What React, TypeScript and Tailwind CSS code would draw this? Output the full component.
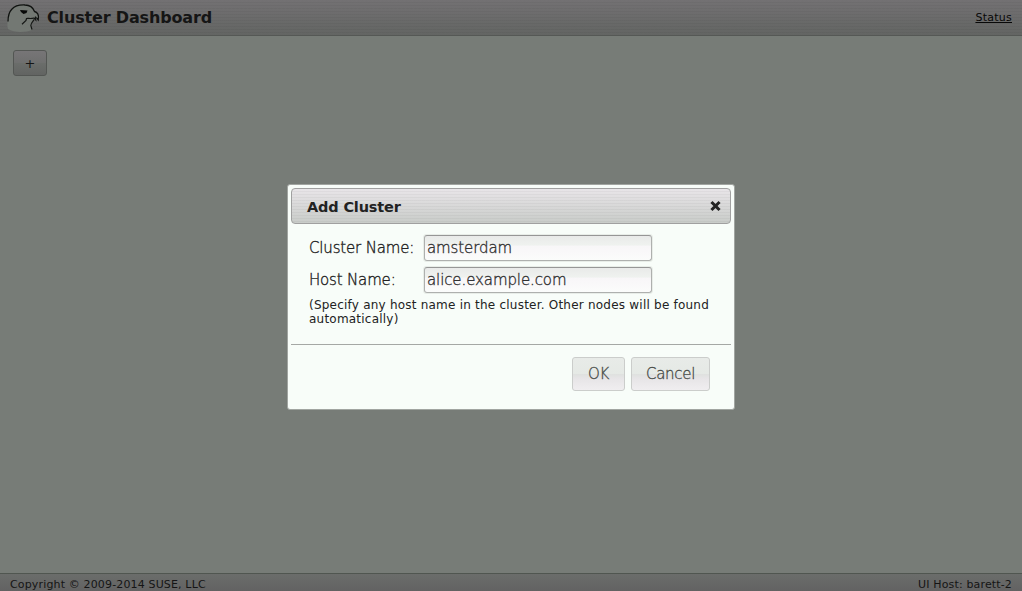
import React from "react";

const sans = "font-['DejaVu_Sans',sans-serif]";

function Logo() {
  return (
    <svg className="-mt-0.5 h-8 w-9 shrink-0" viewBox="0 0 36 32" fill="none">
      <path
        d="M2 28C0.500 24 2 20 2 16C3 10 6 6 10 5C15 3 20 3 24 5C27 7 28 9 28.500 11C32 12 33 14 32.500 18L30 16L28 18C25 22 25.500 25 26 29C20 31.500 8 32 2 28Z"
        fill="#737873"
      />
      <path
        d="M2 20.500C2 15 3 11 6 8C9 4.500 14 3.800 19 4C24 4 27 6.500 28.500 10.500C31 11 33.500 13.500 32.200 19L30.500 16.500"
        stroke="#101210"
        strokeWidth="1.300"
      />
      <path d="M29.500 15.500L29.800 19L28 17C25 18 22.500 17.200 20.500 17.500L20 19.500L16 23.200" stroke="#151715" strokeWidth="1.200" />
      <path d="M28 18.500C27.500 20.500 25 21.500 24.800 24.500L26 28.500" stroke="#151715" strokeWidth="1.200" />
      <path d="M14 9L21.500 9.500L20.500 12L17.500 13L15 11Z" fill="#080908" />
    </svg>
  );
}

function Field({ label, value }: { label: string; value: string }) {
  return (
    <div className="flex h-8 items-center">
      <label className="w-[114px] text-[15px] leading-[18px] font-extralight tracking-[-0.17px] [-webkit-text-stroke:0.35px]">{label}</label>
      <div className="rounded-[3px] border border-[#e8ede8]">
        <input
          className="block h-[26px] w-[228px] rounded-[3px] border border-[#aeb0ae] border-t-[#969696] bg-[linear-gradient(#e9eae9,#eff2ef_38%,#f8f6f8_42%,#fbfcfb)] px-[2px] text-[15px] font-extralight tracking-[-0.1px] text-[#333] outline-none [-webkit-text-stroke:0.35px]"
          defaultValue={value}
        />
      </div>
    </div>
  );
}

export default function App() {
  return (
    <div className={`relative flex h-[591px] w-[1022px] flex-col overflow-hidden bg-[#777c77] text-[#151515] ${sans}`}>
      <header className="flex h-9 shrink-0 items-center justify-between border-b border-[#555855] bg-[repeating-linear-gradient(transparent_0px,transparent_2px,#00000009_2px,#00000009_3px),linear-gradient(#737173,#636563)] pr-2.5 pl-1.5">
        <div className="flex items-center">
          <Logo />
          <h1 className="ml-[5px] text-[16px] leading-5 font-bold tracking-[-0.16px]">Cluster Dashboard</h1>
        </div>
        <a className="pt-px text-[11px] tracking-[0.25px] text-[#080808] underline" href="#">Status</a>
      </header>
      <main className="flex-1 px-[13px] pt-3.5">
        <button className="flex h-[26px] w-[34px] items-center justify-center rounded-[3px] border border-[#535653] bg-[linear-gradient(#777577,#6f706f_48%,#6a6d6a_52%,#626462)] pt-px text-[13px]">+</button>
      </main>
      <footer className="flex h-[18px] shrink-0 items-center justify-between border-t border-[#505650] bg-[linear-gradient(#6b6d6b,#626262)] px-2.5 pt-[5px] text-[11px] leading-[14px]">
        <span className="tracking-[0.15px]">Copyright © 2009-2014 SUSE, LLC</span>
        <span className="tracking-[0.15px]">UI Host: barett-2</span>
      </footer>

      <div className="absolute inset-0 flex items-start justify-center pt-[184px]">
        <section role="dialog" className="flex h-[226px] w-[448px] flex-col rounded-[3px] border border-[#a1a5a1] bg-[#f8fdf9] p-[3px] text-[#222]">
          <div className="flex h-9 shrink-0 items-center justify-between rounded-[4px] border border-[#a0a0a0] bg-[repeating-linear-gradient(transparent_0px,transparent_2px,#00000009_2px,#00000009_3px),linear-gradient(#e8e5e8,#c9ccc9)] pr-[9px] pl-[15px]">
            <h2 className="pt-0.5 text-[14.5px] leading-[18px] font-bold tracking-[-0.16px]">Add Cluster</h2>
            <button aria-label="Close">
              <svg className="h-3 w-[11px]" viewBox="0 0 11 12">
                <path d="M2.500 3L8.500 9M8.500 3L2.500 9" stroke="#222" strokeWidth="3" strokeLinecap="square" />
              </svg>
            </button>
          </div>
          <div className="h-[120px] pt-2 pr-4 pl-[18px]">
            <Field label="Cluster Name:" value="amsterdam" />
            <Field label="Host Name:" value="alice.example.com" />
            <p className="mt-0.5 text-[12px] leading-[14px] tracking-[0.22px]">(Specify any host name in the cluster. Other nodes will be found automatically)</p>
          </div>
          <div className="flex flex-1 items-start justify-end gap-1.5 border-t border-[#a5a8a5] pt-3 pr-[21px] text-[15px] font-extralight tracking-[-0.3px] text-[#454945] [-webkit-text-stroke:0.3px]">
            <button className="h-[34px] w-[53px] rounded-[3px] border border-[#cbcdcb] bg-[linear-gradient(#e8ebe8,#e5e9e5_49%,#dfe1df_51%,#e7e5e7_65%,#f0eef0)]">OK</button>
            <button className="h-[34px] w-[79px] rounded-[3px] border border-[#cbcdcb] bg-[linear-gradient(#e8ebe8,#e5e9e5_49%,#dfe1df_51%,#e7e5e7_65%,#f0eef0)]">Cancel</button>
          </div>
        </section>
      </div>
    </div>
  );
}
